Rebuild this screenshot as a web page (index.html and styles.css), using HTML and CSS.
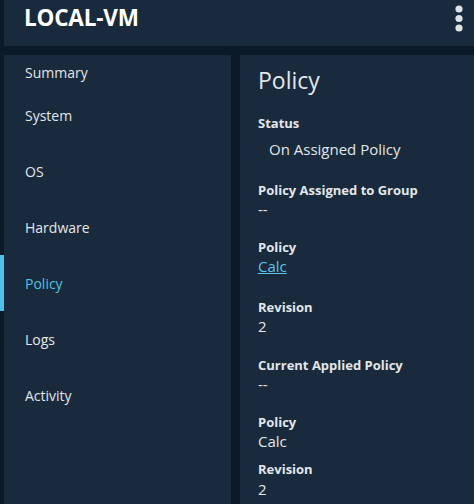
FILE: index.html
```html
<!DOCTYPE html>
<html>
<head>
<meta charset="utf-8">
<link rel="stylesheet" href="styles.css">
</head>
<body>
<div class="page">
  <header class="topbar">
    <h1 class="title">LOCAL-VM</h1>
    <button class="more" aria-label="More">
      <svg width="8" height="28" viewBox="0 0 8 28"><circle cx="4" cy="4" r="3.6" fill="#dfe3e8"/><circle cx="4" cy="13.5" r="3.6" fill="#dfe3e8"/><circle cx="4" cy="23" r="3.6" fill="#dfe3e8"/></svg>
    </button>
  </header>
  <div class="main">
    <nav class="sidebar">
      <a class="nav-item first">Summary</a>
      <a class="nav-item">System</a>
      <a class="nav-item">OS</a>
      <a class="nav-item">Hardware</a>
      <a class="nav-item active">Policy</a>
      <a class="nav-item">Logs</a>
      <a class="nav-item">Activity</a>
    </nav>
    <section class="content">
      <h2 class="heading">Policy</h2>
      <div class="field status">
        <div class="label">Status</div>
        <div class="value indent">On Assigned Policy</div>
      </div>
      <div class="field f-group">
        <div class="label">Policy Assigned to Group</div>
        <div class="value">--</div>
      </div>
      <div class="field f-policy">
        <div class="label">Policy</div>
        <div class="value"><a class="link" href="#">Calc</a></div>
      </div>
      <div class="field f-rev">
        <div class="label">Revision</div>
        <div class="value">2</div>
      </div>
      <div class="field f-current">
        <div class="label">Current Applied Policy</div>
        <div class="value">--</div>
      </div>
      <div class="field f-policy2">
        <div class="label">Policy</div>
        <div class="value">Calc</div>
      </div>
      <div class="field f-rev2">
        <div class="label">Revision</div>
        <div class="value">2</div>
      </div>
    </section>
  </div>
</div>
</body>
</html>
```
FILE: styles.css
```css
html, body {
  margin: 0;
  padding: 0;
  background: #0b1928;
  height: 100%;
  overflow: hidden;
}
body {
  font-family: "Open Sans", "Noto Sans", sans-serif;
  color: #e3e6ea;
}
.page {
  padding-left: 4px;
}
.topbar {
  height: 46px;
  background: #182a3b;
  display: flex;
  align-items: center;
  justify-content: space-between;
  padding: 0 11px 0 20px;
}
.title {
  margin: 0;
  font-size: 22.5px;
  font-weight: 700;
  color: #ffffff;
  letter-spacing: -0.2px;
  line-height: 1;
  margin-top: -10px;
}
.more {
  background: none;
  border: 0;
  padding: 0;
  display: flex;
  margin-top: -8px;
}
.main {
  display: flex;
  margin-top: 9px;
  gap: 9px;
  height: 460px;
}
.sidebar {
  width: 227px;
  background: #182a3b;
  display: flex;
  flex-direction: column;
}
.nav-item {
  height: 56px;
  display: flex;
  align-items: center;
  padding-left: 21px;
  font-size: 14px;
  color: #e3e6ea;
  border-left: 4px solid transparent;
  box-sizing: border-box;
  margin-left: -4px;
}
.nav-item.first {
  height: 32px;
  padding-top: 3px;
}
.nav-item.active {
  color: #4ec2e6;
  border-left-color: #4ec2e6;
}
.content {
  flex: 1;
  background: #182a3b;
  padding: 10px 18px 0 18px;
}
.heading {
  margin: 0 0 19px;
  font-size: 23px;
  font-weight: 400;
  line-height: 30px;
  color: #e3e6ea;
}
.label {
  font-size: 13px;
  font-weight: 700;
  line-height: 18px;
  color: #e3e6ea;
}
.value {
  font-size: 15px;
  line-height: 20px;
  color: #e3e6ea;
}
.value.indent {
  padding-left: 11px;
  margin-top: 7px;
}
.field {
  margin-bottom: 19px;
}
.status {
  margin-bottom: 22px;
}
.f-policy {
  margin-bottom: 22px;
}
.f-rev {
  margin-bottom: 20px;
}
.f-policy2 {
  margin-bottom: 9px;
}
.f-rev2 .value {
  margin-top: 1px;
}
.link {
  color: #5fc4ec;
  text-decoration: underline;
}
```
